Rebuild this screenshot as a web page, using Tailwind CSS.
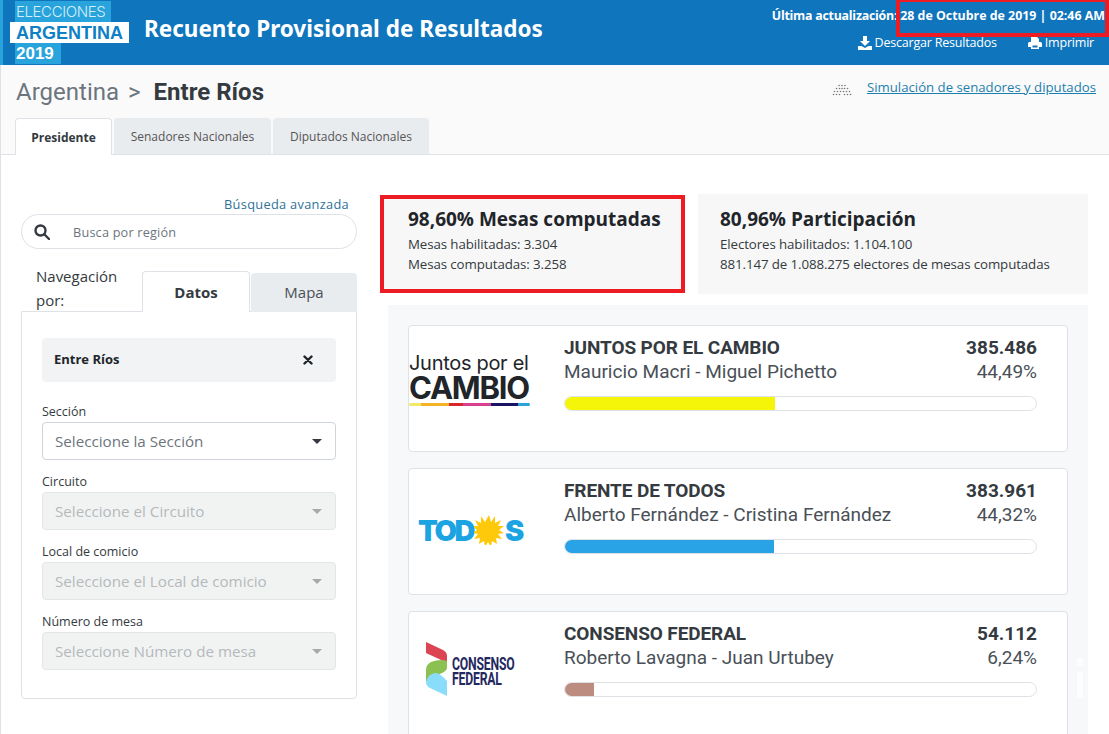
<!DOCTYPE html>
<html lang="es">
<head>
    <meta charset="UTF-8">
    <meta name="viewport" content="width=device-width, initial-scale=1.0">
    <title>Recuento Provisional de Resultados</title>
    <script src="https://cdn.jsdelivr.net/npm/@tailwindcss/browser@4"></script>
</head>
<body class="relative w-[1109px] h-[734px] overflow-hidden bg-white font-['Open_Sans',sans-serif] text-[#212529]">

    <!-- Header -->
    <header class="flex h-[65px] bg-[#0f75bc] text-white">
        <div class="w-[3px] bg-[#29a3dc]"></div>
        <div class="flex flex-col w-[126px] pl-[7px] pt-[1px]">
            <div class="ml-[5px] w-[96px] h-[21px] bg-[#29a3dc] pl-[1px] text-[15px] leading-[22px] font-light text-[#d5eefb] font-['Inter',sans-serif] tracking-[-0.4px] whitespace-nowrap">ELECCIONES</div>
            <div class="w-[119px] h-[21px] bg-white pl-[6px] text-[18px] leading-[22px] font-bold text-[#0f80c6] font-['Liberation_Sans',sans-serif]">ARGENTINA</div>
            <div class="ml-[5px] w-[46px] h-[21px] bg-[#29a3dc] pl-[1px] text-[17px] leading-[22px] font-bold text-white font-['Liberation_Sans',sans-serif]">2019</div>
        </div>
        <h1 class="ml-[15px] mt-[13px] text-[22.500px] leading-[32px] font-bold whitespace-nowrap font-['Noto_Sans',sans-serif]">Recuento Provisional de Resultados</h1>
        <div class="ml-auto pr-[4px] flex flex-col items-end">
            <div class="mt-[7px] text-[12.400px] leading-[18px] font-bold whitespace-nowrap tracking-[-0.25px]">Última actualización: <span class="tracking-[0px]">28 de Octubre de 2019 | 02:46 AM</span></div>
            <div class="mt-[9px] mr-[11px] flex gap-[31px] text-[12.500px] leading-[18px] tracking-[-0.2px]">
                <span class="flex items-center gap-[3px]">
                    <svg class="w-[14px] h-[14px]" viewBox="0 0 14 14" fill="#fff"><path d="M5 0h4v5h3L7 10 2 5h3zM0 10h3.500L7 12l3.500-2H14v4H0z"/></svg>
                    Descargar Resultados
                </span>
                <span class="flex items-center gap-[3px]">
                    <svg class="w-[14px] h-[14px]" viewBox="0 0 14 14" fill="#fff"><path d="M3 1h6l2 2v3H3zM1.500 6h11A1.500 1.500 0 0 1 14 7.500V11h-3v2H3v-2H0V7.500A1.500 1.500 0 0 1 1.500 6zM4.500 9.500V11.500h5V9.500z"/></svg>
                    Imprimir
                </span>
            </div>
        </div>
    </header>

    <!-- Breadcrumb and tabs -->
    <section class="h-[90px] bg-[#fafafa] border-b border-[#dee2e6] pl-[15px] pr-[13px]">
        <div class="flex h-[53px] items-start justify-between">
            <div class="mt-[11px] ml-[1px] flex items-baseline text-[24px] leading-[32px] font-['Roboto',sans-serif]">
                <span class="text-[#6c757d]">Argentina</span>
                <span class="ml-[9px] text-[#6c757d]">&gt;</span>
                <span class="ml-[13px] font-bold text-[#343a40]">Entre Ríos</span>
            </div>
            <div class="mt-[13px] flex items-center gap-[15px]">
                <svg class="w-[20px] h-[12px] mt-[6px]" viewBox="0 0 20 12" fill="#777">
                    <circle cx="1.500" cy="10.500" r=".8"/><circle cx="4.500" cy="10.500" r=".8"/><circle cx="7.500" cy="10.500" r=".8"/><circle cx="12.500" cy="10.500" r=".8"/><circle cx="15.500" cy="10.500" r=".8"/><circle cx="18.500" cy="10.500" r=".8"/>
                    <circle cx="2.500" cy="7.500" r=".8"/><circle cx="5.500" cy="7.500" r=".8"/><circle cx="8.500" cy="7.500" r=".8"/><circle cx="11.500" cy="7.500" r=".8"/><circle cx="14.500" cy="7.500" r=".8"/><circle cx="17.500" cy="7.500" r=".8"/>
                    <circle cx="4.500" cy="4.500" r=".8"/><circle cx="7.500" cy="4.500" r=".8"/><circle cx="10" cy="4.500" r=".8"/><circle cx="12.500" cy="4.500" r=".8"/><circle cx="15.500" cy="4.500" r=".8"/>
                    <circle cx="7" cy="1.500" r=".8"/><circle cx="10" cy="1.500" r=".8"/><circle cx="13" cy="1.500" r=".8"/>
                </svg>
                <a href="#" class="text-[13.200px] leading-[18px] text-[#1d7fae] underline">Simulación de senadores y diputados</a>
            </div>
        </div>
        <nav class="flex gap-[2px] text-[12px]">
            <a href="#" class="relative h-[37px] w-[97px] -mb-[1px] pt-[1px] flex items-center justify-center bg-white border border-b-0 border-[#dee2e6] rounded-t-[4px] font-bold text-[#343a40]">Presidente</a>
            <a href="#" class="h-[36px] w-[157px] pt-[2px] flex items-center justify-center bg-[#e9ecef] rounded-t-[4px] text-[#555]">Senadores Nacionales</a>
            <a href="#" class="h-[36px] w-[156px] pt-[2px] flex items-center justify-center bg-[#e9ecef] rounded-t-[4px] text-[#555]">Diputados Nacionales</a>
        </nav>
    </section>

    <main class="flex pl-[21px]">
        <!-- Left column -->
        <aside class="w-[336px] shrink-0 pt-[40px]">
            <div class="h-[19px] pr-[8px] text-right text-[12.800px] leading-[19px] text-[#2e7199] tracking-[0.3px]">Búsqueda avanzada</div>
            <div class="h-[35px] flex items-center border border-[#dee2e6] rounded-full bg-white">
                <svg class="ml-[12px] w-[16px] h-[16px]" viewBox="0 0 16 16" fill="none" stroke="#343a40" stroke-width="2.400"><circle cx="6.500" cy="6.500" r="5"/><path d="M10.500 10.500l4.500 4.500" stroke-linecap="round"/></svg>
                <span class="ml-[23px] pt-[3px] text-[12.700px] text-[#6c757d] tracking-[0.2px]">Busca por región</span>
            </div>
            <div class="flex h-[63px] -mb-[1px] items-end">
                <div class="w-[121px] pl-[15px] self-start mt-[15px] text-[15px] leading-[24px] text-[#343a40]">Navegación por:</div>
                <div class="relative z-10 h-[41px] w-[108px] flex items-center justify-center bg-white border border-b-0 border-[#dee2e6] rounded-t-[4px] text-[15px] font-bold text-[#343a40]">Datos</div>
                <div class="ml-[1px] h-[39px] w-[106px] flex items-center justify-center bg-[#e9ecef] rounded-t-[4px] text-[15px] text-[#495057]">Mapa</div>
            </div>
            <div class="h-[388px] border border-[#dee2e6] rounded-b-[4px] px-[20px] pt-[26px]">
                <div class="h-[44px] flex items-center justify-between pl-[12px] pr-[23px] bg-[#f1f3f5] rounded-[4px] text-[13px] font-bold text-[#212529]">
                    Entre Ríos
                    <svg class="w-[10px] h-[10px]" viewBox="0 0 10 10" stroke="#212529" stroke-width="2.400" stroke-linecap="round"><path d="M1.500 1.500l7 7M8.500 1.500l-7 7"/></svg>
                </div>
                <label class="block mt-[20px] text-[12.500px] leading-[20px] text-[#343a40]">Sección</label>
                <div class="h-[38px] flex items-center justify-between pl-[12px] pr-[13px] pt-[1px] border border-[#ced4da] rounded-[4px] bg-white text-[15.200px] text-[#6c757d]">
                    Seleccione la Sección
                    <span class="w-0 h-0 border-x-[5px] border-x-transparent border-t-[5px] border-t-[#343a40]"></span>
                </div>
                <label class="block mt-[12px] text-[12.500px] leading-[20px] text-[#343a40]">Circuito</label>
                <div class="h-[38px] flex items-center justify-between pl-[12px] pr-[13px] pt-[1px] border border-[#e3e6e8] rounded-[4px] bg-[#f1f3f3] text-[15.200px] text-[#b5b9bb]">
                    Seleccione el Circuito
                    <span class="w-0 h-0 border-x-[5px] border-x-transparent border-t-[5px] border-t-[#a5a9ac]"></span>
                </div>
                <label class="block mt-[12px] text-[12.500px] leading-[20px] text-[#343a40]">Local de comicio</label>
                <div class="h-[38px] flex items-center justify-between pl-[12px] pr-[13px] pt-[1px] border border-[#e3e6e8] rounded-[4px] bg-[#f1f3f3] text-[15.200px] text-[#b5b9bb]">
                    Seleccione el Local de comicio
                    <span class="w-0 h-0 border-x-[5px] border-x-transparent border-t-[5px] border-t-[#a5a9ac]"></span>
                </div>
                <label class="block mt-[12px] text-[12.500px] leading-[20px] text-[#343a40]">Número de mesa</label>
                <div class="h-[38px] flex items-center justify-between pl-[12px] pr-[13px] pt-[1px] border border-[#e3e6e8] rounded-[4px] bg-[#f1f3f3] text-[15.200px] text-[#b5b9bb]">
                    Seleccione Número de mesa
                    <span class="w-0 h-0 border-x-[5px] border-x-transparent border-t-[5px] border-t-[#a5a9ac]"></span>
                </div>
            </div>
        </aside>

        <!-- Right column -->
        <div class="ml-[23px] w-[708px] shrink-0 pt-[39px]">
            <div class="flex items-start">
                <div class="w-[305px] h-[98px] mt-[1px] border-4 border-[#ed1c24] bg-[#f7f7f7] pl-[24px] pt-[6px]">
                    <div class="text-[19px] leading-[28px] font-bold text-[#212529] whitespace-nowrap">98,60% Mesas computadas</div>
                    <div class="mt-[1px] text-[13.300px] leading-[20px] text-[#343a40] tracking-[-0.1px] whitespace-nowrap">Mesas habilitadas: 3.304<br>Mesas computadas: 3.258</div>
                </div>
                <div class="ml-[13px] w-[390px] h-[100px] bg-[#f7f7f7] pl-[22px] pt-[11px]">
                    <div class="text-[19px] leading-[28px] font-bold text-[#212529] whitespace-nowrap">80,96% Participación</div>
                    <div class="mt-[1px] text-[13.300px] leading-[20px] text-[#343a40] tracking-[-0.1px] whitespace-nowrap">Electores habilitados: 1.104.100<br>881.147 de 1.088.275 electores de mesas computadas</div>
                </div>
            </div>

            <div class="ml-[8px] mt-[11px] w-[700px] h-[429px] overflow-hidden bg-[#f7f8fa] px-[20px] pt-[20px] flex flex-col gap-[16px] font-['Roboto',sans-serif]">
                <!-- Juntos por el Cambio -->
                <article class="h-[127px] shrink-0 flex bg-white border border-[#dee2e6] rounded-[4px]">
                    <div class="w-[155px] shrink-0 pt-[27px] text-[#212529]">
                        <div class="text-[20px] leading-[21px] whitespace-nowrap font-['Inter',sans-serif] tracking-[-0.3px]">Juntos por el</div>
                        <div class="w-[122px] text-[31px] leading-[27px] font-bold font-['Inter',sans-serif] tracking-[-1.200px]">CAMBIO</div>
                        <div class="flex w-[121px] h-[3px] mt-[2px] overflow-hidden rounded-full">
                            <span class="w-[12px] bg-[#f2e96b]"></span><span class="w-[28px] bg-[#f4b324]"></span><span class="w-[14px] bg-[#d8262c]"></span><span class="w-[28px] bg-[#d9418f]"></span><span class="w-[27px] bg-[#1b1464]"></span><span class="w-[12px] bg-[#29a3dc]"></span>
                        </div>
                    </div>
                    <div class="w-[473px] pt-[10px]">
                        <div class="flex justify-between text-[19px] leading-[23px] font-bold text-[#343a40]"><span class="tracking-[-0.1px]">JUNTOS POR EL CAMBIO</span><span>385.486</span></div>
                        <div class="flex justify-between text-[19px] leading-[26px] text-[#495057]"><span>Mauricio Macri - Miguel Pichetto</span><span>44,49%</span></div>
                        <div class="mt-[11px] h-[15px] border border-[#dee2e6] rounded-[8px] overflow-hidden"><div class="h-full w-[44.49%] bg-[#f5f50a]"></div></div>
                    </div>
                </article>
                <!-- Frente de Todos -->
                <article class="h-[127px] shrink-0 flex bg-white border border-[#dee2e6] rounded-[4px]">
                    <div class="w-[155px] shrink-0 pl-[9px] pt-[43px]">
                        <div class="flex items-center h-[36px] text-[29px] font-black font-['Inter',sans-serif] text-[#1ba3e2] tracking-[-2.500px] leading-none">
                            TOD
                            <svg class="ml-[1px] w-[30px] h-[30px] shrink-0" viewBox="0 0 30 30" fill="#ffc90b"><path d="M15 0l2 7 4-6 0 7 6-3-3 6 6 0-5 4 5 3-6 1 4 5-6-1 1 6-5-3-1 6-3-5-3 5-1-6-5 3 1-6-6 1 4-5-6-1 5-3-5-4 6 0-3-6 6 3 0-7 4 6z"/></svg>
                            <span class="ml-[1px]">S</span>
                        </div>
                    </div>
                    <div class="w-[473px] pt-[10px]">
                        <div class="flex justify-between text-[19px] leading-[23px] font-bold text-[#343a40]"><span class="tracking-[-0.1px]">FRENTE DE TODOS</span><span>383.961</span></div>
                        <div class="flex justify-between text-[19px] leading-[26px] text-[#495057]"><span>Alberto Fernández - Cristina Fernández</span><span>44,32%</span></div>
                        <div class="mt-[11px] h-[15px] border border-[#dee2e6] rounded-[8px] overflow-hidden"><div class="h-full w-[44.32%] bg-[#29a3e6]"></div></div>
                    </div>
                </article>
                <!-- Consenso Federal -->
                <article class="h-[127px] shrink-0 flex bg-white border border-[#dee2e6] rounded-[4px]">
                    <div class="w-[155px] shrink-0 flex pl-[17px] pt-[30px]">
                        <svg class="w-[21px] h-[54px] shrink-0" viewBox="0 0 21 54">
                            <path d="M0 0l17 8q4 2 4 6v11q-2-6-8-8L0 11z" fill="#dc4452"/>
                            <path d="M21 19v7q0 3-7 6Q5 35 0 40V28q0-7 8-9 8-2 13 0z" fill="#8cc152"/>
                            <path d="M0 40q2-8 9-9 4-1 12 8v15L4 46q-4-2-4-6z" fill="#8adcfb"/>
                        </svg>
                        <div class="ml-[5px] mt-[14px] font-bold text-[#23285f] text-[18px] leading-[15px] tracking-[-0.3px] scale-x-[.68] origin-left whitespace-nowrap">CONSENSO<br>FEDERAL</div>
                    </div>
                    <div class="w-[473px] pt-[10px]">
                        <div class="flex justify-between text-[19px] leading-[23px] font-bold text-[#343a40]"><span class="tracking-[-0.1px]">CONSENSO FEDERAL</span><span>54.112</span></div>
                        <div class="flex justify-between text-[19px] leading-[26px] text-[#495057]"><span>Roberto Lavagna - Juan Urtubey</span><span>6,24%</span></div>
                        <div class="mt-[11px] h-[15px] border border-[#dee2e6] rounded-[8px] overflow-hidden"><div class="h-full w-[6.24%] bg-[#bc8c80]"></div></div>
                    </div>
                </article>
            </div>
        </div>
    </main>

    <!-- Highlight drawn over the date -->
    <div class="absolute left-[896px] top-[-2px] w-[213px] h-[39px] border-4 border-[#ed1c24]"></div>
    <!-- Thin line on the page's left edge and the white smudge on the results panel -->
    <div class="absolute left-0 top-[65px] w-[1px] h-[669px] bg-[#dee2e6]"></div>
    <div class="absolute left-[1077px] top-[658px] w-[6px] h-[8px] bg-white/70"></div>
    <div class="absolute left-[1077px] top-[672px] w-[6px] h-[26px] bg-white/70"></div>
</body>
</html>
